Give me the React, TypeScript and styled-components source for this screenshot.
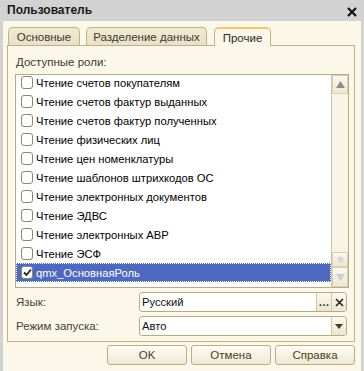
import React from "react";
import styled, { createGlobalStyle, css } from "styled-components";

const GlobalStyle = createGlobalStyle`
  html, body { margin: 0; padding: 0; background: #d2d2d2; }
  body { font-family: "Liberation Sans", Arial, sans-serif; font-size: 11px; }
  * { box-sizing: border-box; }
`;

const Window = styled.div`
  width: 364px;
  height: 371px;
  background: #d2d2d2;
  display: flex;
  flex-direction: column;
  overflow: hidden;
`;

const TitleBar = styled.div`
  height: 21px;
  flex: none;
  display: flex;
  align-items: center;
  justify-content: space-between;
  padding: 0 7px 1px 7px;
`;

const Title = styled.div`
  font-weight: bold;
  font-size: 12px;
  color: #1a1a1a;
`;

const CloseButton = styled.div`
  width: 10px;
  height: 10px;
  display: flex;
  margin-top: 4px;
`;

const Body = styled.div`
  flex: 1;
  margin: 0 3px;
  background: #fbf8e9;
  padding: 6px 6px 0 4px;
  display: flex;
  flex-direction: column;
`;

const TabStrip = styled.div`
  display: flex;
  align-items: flex-end;
  height: 18px;
  padding-left: 1px;
  gap: 6px;
  position: relative;
  z-index: 1;
`;

const Tab = styled.div<{ $active?: boolean; $w: number }>`
  width: ${(p) => p.$w}px;
  height: 18px;
  border: 1px solid #bdb28a;
  border-bottom: none;
  border-radius: 5px 5px 0 0;
  display: flex;
  align-items: center;
  justify-content: center;
  color: #3c3a30;
  font-size: 11.5px;
  padding-top: 1px;
  background: linear-gradient(#f0ead3, #e8e1c6);
  ${(p) =>
    p.$active &&
    css`
      height: 19px;
      margin-bottom: -1px;
      margin-left: 1px;
      background: #fbf8e9;
      border-top: 2px solid #f2c56e;
      color: #2c2a24;
      padding-top: 0;
    `}
`;

const Panel = styled.div`
  border: 1px solid #bcb18a;
  height: 297px;
  width: 348px;
  padding: 9px 5px 0 7px;
  display: flex;
  flex-direction: column;
`;

const SectionLabel = styled.div`
  height: 14px;
  line-height: 14px;
  margin: 0 0 5px 1px;
  color: #3e3a2e;
  font-size: 11.5px;
`;

const ListBox = styled.div`
  height: 214px;
  border: 1px solid #b5ab86;
  background: #ffffff;
  display: flex;
`;

const ListViewport = styled.div`
  flex: 1;
  overflow: hidden;
`;

const Rows = styled.div`
  margin-top: -2px;
  display: flex;
  flex-direction: column;
`;

const Row = styled.div<{ $selected?: boolean }>`
  height: 19px;
  display: flex;
  align-items: center;
  padding-left: 5px;
  gap: 3px;
  color: #000;
  font-size: 11.2px;
  white-space: nowrap;
  ${(p) =>
    p.$selected &&
    css`
      background: #4f69c0;
      color: #ffffff;
      outline: 1px dotted #ffffff;
      outline-offset: -1px;
    `}
`;

const CheckBox = styled.div<{ $checked?: boolean }>`
  width: 12px;
  height: 13px;
  border: 1px solid #8a877a;
  border-radius: 3px;
  background: #ffffff;
  flex: none;
  display: flex;
  align-items: center;
  justify-content: center;
`;

const Scrollbar = styled.div`
  width: 17px;
  border-left: 1px solid #cdc6a8;
  background: #f7f4e6;
  display: flex;
  flex-direction: column;
`;

const ScrollButton = styled.div<{ $h: number }>`
  height: ${(p) => p.$h}px;
  border: 1px solid #d7d0b3;
  background: linear-gradient(#faf8ee, #ede8d3);
  display: flex;
  align-items: center;
  justify-content: center;
`;

const ScrollTrack = styled.div`
  flex: 1;
`;

const FieldGrid = styled.div`
  display: grid;
  grid-template-columns: 124px 208px;
  row-gap: 4px;
  margin-top: 4px;
`;

const FieldLabel = styled.div`
  display: flex;
  align-items: center;
  padding-left: 1px;
  color: #4a4230;
  font-size: 11.5px;
`;

const InputBox = styled.div`
  height: 20px;
  border: 1px solid #b5ab86;
  border-radius: 3px;
  background: #ffffff;
  display: flex;
  overflow: hidden;
`;

const InputText = styled.div`
  flex: 1;
  display: flex;
  align-items: center;
  padding-left: 2px;
  color: #111;
  font-size: 11.2px;
`;

const InputButton = styled.div`
  width: 15px;
  border-left: 1px solid #cfc7a6;
  background: linear-gradient(#fbf9ef, #ece6cf);
  display: flex;
  align-items: center;
  justify-content: center;
  color: #333;
  font-weight: bold;
`;

const ButtonRow = styled.div`
  display: flex;
  justify-content: flex-end;
  gap: 4px;
  margin-top: 3px;
`;

const Button = styled.div`
  width: 80px;
  height: 20px;
  border: 1px solid #b9ae87;
  border-radius: 3px;
  background: linear-gradient(#fdfcf5, #efe9d3);
  display: flex;
  align-items: center;
  justify-content: center;
  color: #4a3f26;
  font-size: 11.5px;
`;

const roles = [
  "Чтение счетов покупателям",
  "Чтение счетов фактур выданных",
  "Чтение счетов фактур полученных",
  "Чтение физических лиц",
  "Чтение цен номенклатуры",
  "Чтение шаблонов штрихкодов ОС",
  "Чтение электронных документов",
  "Чтение ЭДВС",
  "Чтение электронных АВР",
  "Чтение ЭСФ",
];

const Check = () => (
  <svg width="9" height="9" viewBox="0 0 9 9">
    <polyline points="1,4.5 3.5,7 8,1.5" fill="none" stroke="#222" strokeWidth="1.8" />
  </svg>
);

const Tri = ({ dir, color }: { dir: "up" | "down"; color: string }) => (
  <svg width="9" height="7" viewBox="0 0 9 7">
    {dir === "up" ? (
      <polygon points="4.5,0 9,7 0,7" fill={color} />
    ) : (
      <polygon points="0,0 9,0 4.5,7" fill={color} />
    )}
  </svg>
);

export default function App() {
  return (
    <>
      <GlobalStyle />
      <Window>
        <TitleBar>
          <Title>Пользователь</Title>
          <CloseButton>
            <svg width="10" height="10" viewBox="0 0 10 10">
              <path d="M1 1 L9 9 M9 1 L1 9" stroke="#111" strokeWidth="2.2" />
            </svg>
          </CloseButton>
        </TitleBar>
        <Body>
          <TabStrip>
            <Tab $w={72}>Основные</Tab>
            <Tab $w={121}>Разделение данных</Tab>
            <Tab $active $w={57}>Прочие</Tab>
          </TabStrip>
          <Panel>
            <SectionLabel>Доступные роли:</SectionLabel>
            <ListBox>
              <ListViewport>
                <Rows>
                  {roles.map((r) => (
                    <Row key={r}>
                      <CheckBox />
                      <span>{r}</span>
                    </Row>
                  ))}
                  <Row $selected>
                    <CheckBox $checked>
                      <Check />
                    </CheckBox>
                    <span>qmx_ОсновнаяРоль</span>
                  </Row>
                </Rows>
              </ListViewport>
              <Scrollbar>
                <ScrollButton $h={19}>
                  <Tri dir="up" color="#8c8c8c" />
                </ScrollButton>
                <ScrollTrack />
                <ScrollButton $h={15}>
                  <svg width="7" height="7" viewBox="0 0 7 7">
                    <circle cx="3.5" cy="3.5" r="3" fill="#d8d8d8" />
                  </svg>
                </ScrollButton>
                <ScrollButton $h={20}>
                  <Tri dir="down" color="#cdcdcd" />
                </ScrollButton>
              </Scrollbar>
            </ListBox>
            <FieldGrid>
              <FieldLabel>Язык:</FieldLabel>
              <InputBox>
                <InputText>Русский</InputText>
                <InputButton>…</InputButton>
                <InputButton>
                  <svg width="9" height="9" viewBox="0 0 9 9">
                    <path d="M1 1 L8 8 M8 1 L1 8" stroke="#222" strokeWidth="1.6" />
                  </svg>
                </InputButton>
              </InputBox>
              <FieldLabel>Режим запуска:</FieldLabel>
              <InputBox>
                <InputText>Авто</InputText>
                <InputButton>
                  <svg width="8" height="5" viewBox="0 0 8 5">
                    <polygon points="0,0 8,0 4,5" fill="#4a3c1c" />
                  </svg>
                </InputButton>
              </InputBox>
            </FieldGrid>
          </Panel>
          <ButtonRow>
            <Button>OK</Button>
            <Button>Отмена</Button>
            <Button>Справка</Button>
          </ButtonRow>
        </Body>
      </Window>
    </>
  );
}
